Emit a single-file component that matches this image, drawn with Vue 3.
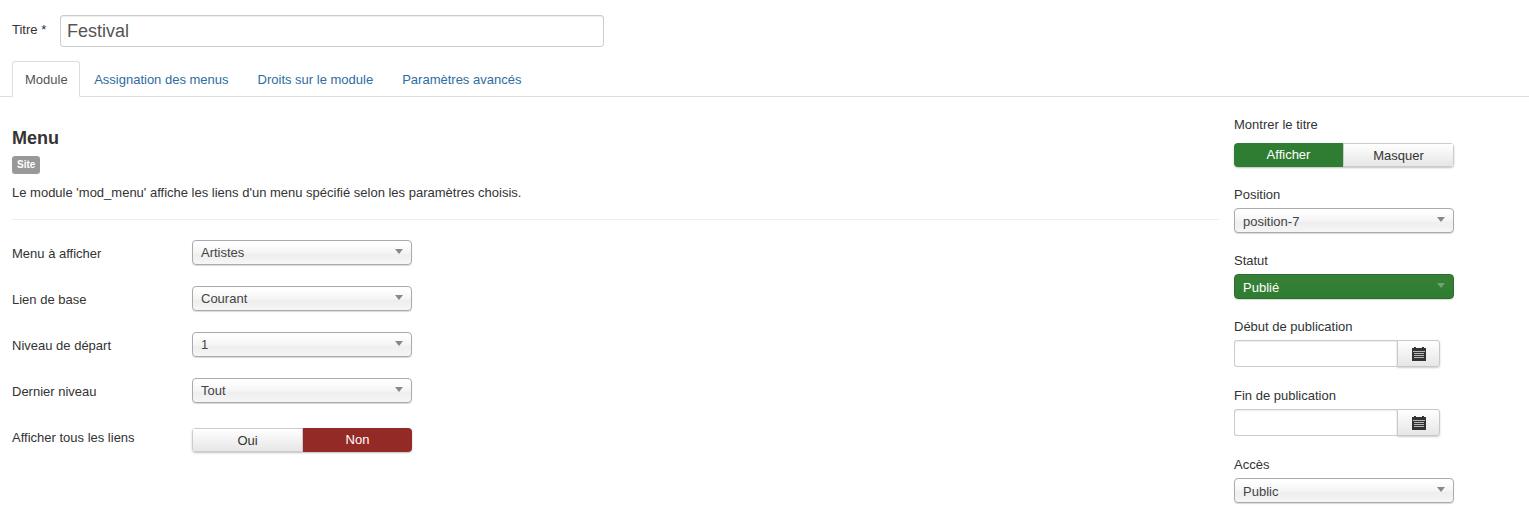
<script setup>
const mainFields = [
  { label: 'Menu à afficher', value: 'Artistes' },
  { label: 'Lien de base', value: 'Courant' },
  { label: 'Niveau de départ', value: '1' },
  { label: 'Dernier niveau', value: 'Tout' },
]
const tabs = ['Assignation des menus', 'Droits sur le module', 'Paramètres avancés']
</script>

<template>
  <div class="page">
    <div class="title-row">
      <label class="title-label">Titre *</label>
      <div class="title-input">Festival</div>
    </div>

    <div class="tabs">
      <div class="tab active">Module</div>
      <div v-for="t in tabs" :key="t" class="tab">{{ t }}</div>
    </div>

    <div class="content">
      <div class="main">
        <h3 class="heading">Menu</h3>
        <div class="badge">Site</div>
        <p class="desc">Le module 'mod_menu' affiche les liens d'un menu spécifié selon les paramètres choisis.</p>
        <div class="rule"></div>

        <div v-for="f in mainFields" :key="f.label" class="form-row">
          <span class="row-label">{{ f.label }}</span>
          <div class="select">
            <span>{{ f.value }}</span><i class="caret"></i>
          </div>
        </div>
        <div class="form-row toggle-row">
          <span class="row-label">Afficher tous les liens</span>
          <div class="toggle">
            <div class="opt">Oui</div>
            <div class="opt on red">Non</div>
          </div>
        </div>
      </div>

      <aside class="side">
        <div class="side-group first">
          <div class="side-label">Montrer le titre</div>
          <div class="toggle">
            <div class="opt on green">Afficher</div>
            <div class="opt">Masquer</div>
          </div>
        </div>
        <div class="side-group">
          <div class="side-label">Position</div>
          <div class="select"><span>position-7</span><i class="caret"></i></div>
        </div>
        <div class="side-group">
          <div class="side-label">Statut</div>
          <div class="select green-select"><span>Publié</span><i class="caret"></i></div>
        </div>
        <div class="side-group">
          <div class="side-label">Début de publication</div>
          <div class="date">
            <div class="date-input"></div>
            <div class="date-btn">
              <svg width="14" height="14" viewBox="0 0 14 14"><path fill="#333" d="M0 1h2V0h2v1h6V0h2v1h2v13H0z"/><path fill="#b8b8b8" d="M1 4h12v1H1zM2 6h10v1H2zM2 8h10v1H2zM2 10h10v1H2z"/></svg>
            </div>
          </div>
        </div>
        <div class="side-group">
          <div class="side-label">Fin de publication</div>
          <div class="date">
            <div class="date-input"></div>
            <div class="date-btn">
              <svg width="14" height="14" viewBox="0 0 14 14"><path fill="#333" d="M0 1h2V0h2v1h6V0h2v1h2v13H0z"/><path fill="#b8b8b8" d="M1 4h12v1H1zM2 6h10v1H2zM2 8h10v1H2zM2 10h10v1H2z"/></svg>
            </div>
          </div>
        </div>
        <div class="side-group">
          <div class="side-label">Accès</div>
          <div class="select"><span>Public</span><i class="caret"></i></div>
        </div>
      </aside>
    </div>
  </div>
</template>

<style>
html, body { margin: 0; background: #fff; overflow: hidden; }
</style>

<style scoped>
.page {
  width: 1529px;
  height: 521px;
  overflow: hidden;
  font-family: "Liberation Sans", Arial, sans-serif;
  font-size: 13px;
  color: #333;
  box-sizing: border-box;
  padding-top: 15px;
}
.title-row { display: flex; padding-left: 12px; height: 32px; }
.title-label { width: 48px; padding-top: 7px; line-height: 15px; }
.title-input {
  width: 544px; height: 32px; box-sizing: border-box;
  border: 1px solid #ccc; border-radius: 3px;
  box-shadow: inset 0 1px 1px rgba(0,0,0,.075);
  font-size: 18px; line-height: 30px; padding-left: 6px; color: #555;
}
.tabs {
  display: flex; margin-top: 14px; padding-left: 12px; height: 35px;
  border-bottom: 1px solid #ddd;
}
.tab {
  padding: 0 13.5px; line-height: 35px; color: #2d6ca2; height: 36px;
  box-sizing: border-box; border: 1px solid transparent;
}
.tab.active {
  padding: 0 11px 0 12px; color: #555; background: #fff;
  border-color: #ddd; border-bottom-color: #fff; border-radius: 3px 3px 0 0;
}
.content { display: flex; padding-left: 12px; }
.main { width: 1207px; padding-top: 31px; }
.heading { margin: 0; font-size: 18px; line-height: 20px; font-weight: bold; color: #333; }
.badge {
  display: inline-block; margin-top: 8px; background: #999; color: #fff;
  font-size: 10px; font-weight: bold; line-height: 18px; height: 18px;
  padding: 0 5px; border-radius: 3px; vertical-align: top;
}
.desc { margin: 11px 0 0; line-height: 15px; }
.rule { height: 1px; background: #eee; margin-top: 19px; margin-bottom: 20px; }
.form-row { display: flex; height: 26px; margin-bottom: 20px; }
.toggle-row { margin-top: 24px; }
.row-label { width: 180px; line-height: 15px; padding-top: 6px; }
.toggle-row .row-label { padding-top: 2px; }
.select {
  width: 220px; height: 25px; box-sizing: border-box; position: relative;
  border: 1px solid #aaa; border-radius: 4px;
  background: linear-gradient(#fff 10%, #f5f5f5 50%, #eee 60%, #f6f6f6);
  box-shadow: 0 1px 1px rgba(0,0,0,.15);
  padding-left: 8px; line-height: 23px; color: #444;
}
.side .select { line-height: 25px; }
.caret {
  position: absolute; right: 8px; top: 8px; width: 0; height: 0;
  border-left: 4px solid transparent; border-right: 4px solid transparent;
  border-top: 5px solid #888;
}
.green-select {
  background: linear-gradient(#378137, #2f7d32);
  border-color: #2a6e2d; color: #fff;
}
.green-select .caret { border-top-color: #6fa372; }
.toggle {
  display: flex; width: 220px; height: 24px; box-sizing: border-box;
  border-radius: 4px; box-shadow: 0 1px 2px rgba(0,0,0,.25);
  overflow: hidden;
}
.opt {
  flex: 1 1 0; text-align: center; line-height: 23px; box-sizing: border-box;
  border: 1px solid #ccc; color: #333;
  background: linear-gradient(#fff, #e6e6e6);
}
.opt.on { color: #fff; border: none; line-height: 24px; }
.opt.green { background: #2f7d32; }
.opt.red { background: #942a25; }
.side { width: 220px; margin-left: 15px; margin-top: 20px; }
.side-group { margin-top: 20px; }
.side-group.first { margin-top: 0; }
.side-label { line-height: 15px; margin-bottom: 6px; }
.first .side-label { margin-bottom: 11px; }
.date { display: flex; width: 206px; height: 27px; margin-bottom: 21px; }
.date-input {
  flex: 1; box-sizing: border-box; border: 1px solid #ccc; border-right: none;
  border-radius: 3px 0 0 3px; box-shadow: inset 0 1px 1px rgba(0,0,0,.075);
}
.date-btn {
  width: 43px; box-sizing: border-box; border: 1px solid #c8c8c8; border-radius: 0 3px 3px 0;
  background: linear-gradient(#fff, #e6e6e6); box-shadow: 0 1px 2px rgba(0,0,0,.2);
  display: flex; align-items: center; justify-content: center;
}
</style>
